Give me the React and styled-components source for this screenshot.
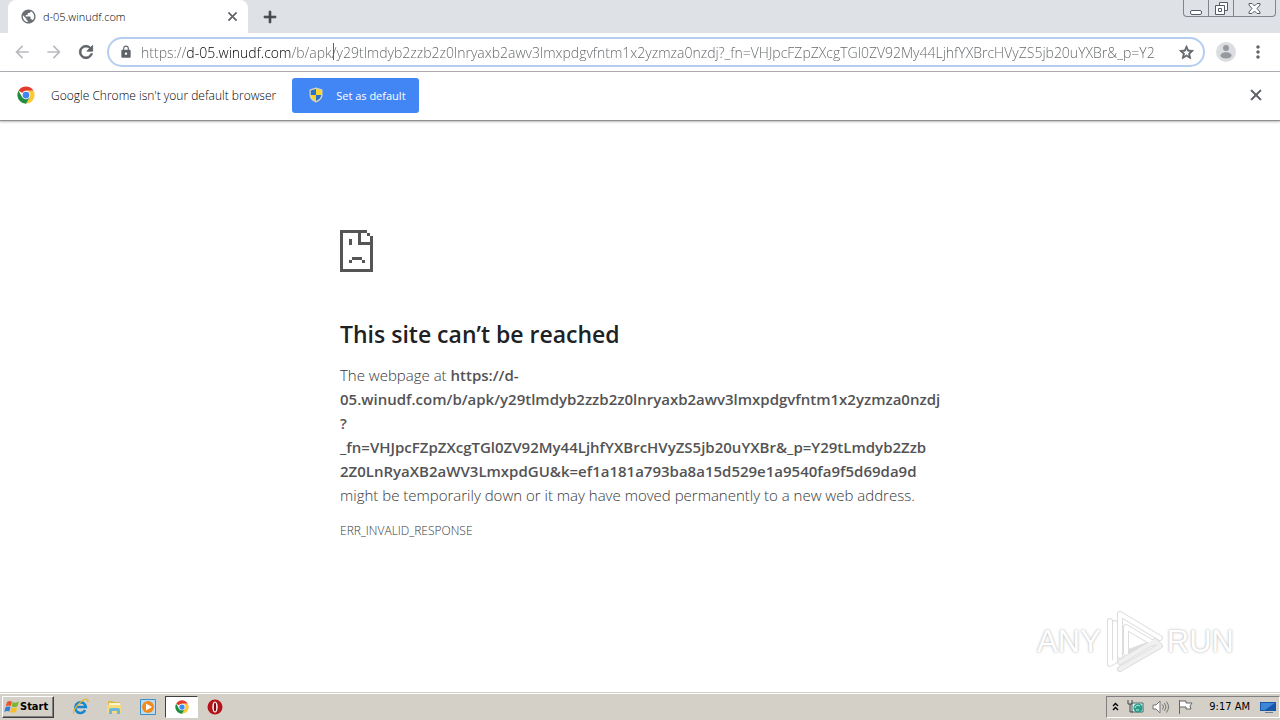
import React from 'react';
import styled, { createGlobalStyle } from 'styled-components';
import {
  MdAdd,
  MdArrowBack,
  MdArrowForward,
  MdClose,
  MdLock,
  MdMoreVert,
  MdPublic,
  MdRefresh,
  MdStarBorder,
} from 'react-icons/md';

const uiFont = '"Open Sans", "Noto Sans", sans-serif';
const taskFont = '"DejaVu Sans Condensed", "DejaVu Sans", sans-serif';

const GlobalStyle = createGlobalStyle`
  * {
    box-sizing: border-box;
  }
  body {
    margin: 0;
    background: #fff;
    font-family: ${uiFont};
    font-weight: 300;
  }
  button {
    margin: 0;
    padding: 0;
    border: 0;
    background: none;
    font-family: inherit;
    font-weight: inherit;
  }
  svg {
    display: block;
    flex: none;
  }
`;

const Screen = styled.div`
  min-height: 100vh;
  display: flex;
  flex-direction: column;
`;

const TabStrip = styled.div`
  height: 33px;
  padding-left: 8px;
  display: flex;
  background: #dee1e6;
`;
const Tab = styled.div`
  width: 240px;
  padding: 0 8px 0 12px;
  display: flex;
  align-items: center;
  gap: 6px;
  background: #fff;
  border-radius: 8px 8px 0 0;
  color: #000;
  font-size: 11px;
`;
const TabTitle = styled.span`
  flex: 1;
`;
const IconButton = styled.button`
  width: ${props => props.$size || 24}px;
  height: ${props => props.$size || 24}px;
  flex: none;
  display: flex;
  align-items: center;
  justify-content: center;
  color: ${props => props.$color || '#5f6368'};
  path:not([fill="none"]) {
    stroke: currentColor;
    stroke-width: ${props => (props.$bold ? 1 : 0)}px;
  }
`;
const NewTab = styled(IconButton)`
  margin: 5px 0 0 10px;
`;
const WindowControls = styled.div`
  height: 17px;
  margin: 0 4px 0 auto;
  display: flex;
  border: 1px solid #80858c;
  border-top: 0;
  border-radius: 0 0 4px 4px;
`;
const WindowButton = styled.button`
  width: ${props => props.$width}px;
  display: flex;
  align-items: center;
  justify-content: center;
  & + & {
    border-left: 1px solid #80858c;
  }
`;

const Toolbar = styled.div`
  height: 39px;
  padding: 0 10px;
  display: flex;
  align-items: center;
  border-bottom: 1px solid #a9abb1;
`;
const NavButtons = styled.div`
  display: flex;
  gap: 8px;
  margin-right: 9px;
`;
const Omnibox = styled.div`
  position: relative;
  flex: 1;
  min-width: 0;
  height: 30px;
  padding: 0 7px 0 10px;
  display: flex;
  align-items: center;
  gap: 8px;
  border: 2px solid #b5cdee;
  border-radius: 15px;
`;
// the host part of the address is darker than the rest
const Address = styled.input`
  flex: 1;
  min-width: 0;
  height: 24px;
  margin-right: 13px;
  padding: 0;
  border: 0;
  outline: 0;
  color: #74787c;
  font-family: ${uiFont};
  font-size: 14px;
  font-weight: 300;
  background: linear-gradient(90deg, #5f6265 46px, #000 46px, #000 151px, #5f6265 151px);
  -webkit-background-clip: text;
  background-clip: text;
  -webkit-text-fill-color: transparent;
`;
const Caret = styled.span`
  position: absolute;
  left: 224px;
  top: 4px;
  width: 1px;
  height: 17px;
  background: #5f6368;
`;
const ToolbarEnd = styled.div`
  display: flex;
  align-items: center;
  gap: 10px;
  margin-left: 11px;
`;

const InfoBar = styled.div`
  height: 49px;
  padding: 0 12px 2px 17px;
  display: flex;
  align-items: center;
  border-bottom: 1px solid #8f8f8f;
  box-shadow: 0 1px 2px #bbb;
  color: #000;
  font-size: 12px;
`;
const InfoText = styled.span`
  margin: 0 16px;
`;
const DefaultButton = styled.button`
  width: 127px;
  height: 35px;
  padding-left: 16px;
  display: flex;
  align-items: center;
  gap: 12px;
  border-radius: 3px;
  background: #4285f4;
  color: #fff;
  font-size: 11px;
  font-weight: 400;
  margin-right: auto;
`;

const Page = styled.main`
  position: relative;
  flex: 1;
  padding: 109px 24px 24px;
`;
const ErrorContent = styled.div`
  max-width: 600px;
  margin: 0 auto;
  color: #38383a;
  font-size: 15px;
  line-height: 24px;
  p {
    margin: 0;
  }
  strong {
    color: #535355;
    font-weight: 600;
  }
`;
const Title = styled.h1`
  margin: 46px 0 13px;
  color: #202124;
  font-size: 23px;
  font-weight: 600;
  line-height: 32px;
`;
const ErrorCode = styled.div`
  margin-top: 12px;
  font-size: 12px;
`;
const Watermark = styled.div`
  position: absolute;
  right: 46px;
  bottom: 18px;
  display: flex;
  align-items: center;
  gap: 4px;
  color: #fff;
  font-family: "Liberation Sans", sans-serif;
  font-size: 31px;
  font-weight: 400;
  line-height: 64px;
  text-shadow: 0 0 3px #bbb, 0 0 1px #ccc;
`;

const Taskbar = styled.footer`
  height: 28px;
  padding: 2px 0 2px 2px;
  display: flex;
  align-items: center;
  border-top: 1px solid #d4d0c8;
  background: #d4d0c8;
  box-shadow: inset 0 1px #fff;
  font-family: ${taskFont};
  font-size: 11px;
  font-weight: 400;
`;
const StartButton = styled.button`
  height: 22px;
  width: 52px;
  padding: 0 1px;
  display: flex;
  align-items: center;
  border: 1px solid;
  border-color: #fff #404040 #404040 #fff;
  box-shadow: inset -1px -1px #808080;
  color: #000;
  font-family: ${taskFont};
  font-size: 11px;
  font-weight: 700;
`;
const QuickLaunch = styled.div`
  display: flex;
  margin-left: 9px;
`;
const TaskButton = styled.button`
  width: 34px;
  height: 22px;
  display: flex;
  align-items: center;
  justify-content: center;
  ${props => props.$active && `
    width: 33px;
    background: #fff;
    border: 1px solid;
    border-color: #404040 #fff #fff #404040;
  `}
`;
const Tray = styled.div`
  height: 22px;
  margin-left: auto;
  padding: 0 3px 0 5px;
  display: flex;
  align-items: center;
  gap: 8px;
  border: 1px solid;
  border-color: #808080 #fff #fff #808080;
`;
const Clock = styled.time`
  margin: 0 2px 0 7px;
`;

const ChromeLogo = ({ size = 18 }) => (
  <svg width={size} height={size} viewBox="0 0 48 48">
    <path d="M24 24 4.1 12.5A23 23 0 0 1 43.9 12.5H24z" fill="#e33b2e" />
    <path d="M24 12.5h19.9A23 23 0 0 1 24 47l10-17.3z" fill="#fcc934" />
    <path d="M4.1 12.5A23 23 0 0 0 24 47l10-17.3L14 29.7z" fill="#1e8e3e" />
    <circle cx="24" cy="24" r="11.5" fill="#fff" />
    <circle cx="24" cy="24" r="9" fill="#4285f4" />
  </svg>
);

const Shield = () => (
  <svg width="16" height="16" viewBox="0 0 16 16">
    <path d="M8 .5 14.5 2.5V8c0 3.5-3 6-6.5 7.5C4.5 14 1.5 11.5 1.5 8V2.5z" fill="#d5d4b8" />
    <path d="M8 2v6H2.8V3.5z" fill="#2a6fc9" />
    <path d="m8 2 5.2 1.5V8H8z" fill="#fbd52b" />
    <path d="M2.8 8H8v6C5 12.6 2.9 10.5 2.8 8z" fill="#fbd52b" />
    <path d="M13.2 8H8v6c3-1.4 5.1-3.5 5.2-6z" fill="#2a6fc9" />
  </svg>
);

const Avatar = () => (
  <svg width="20" height="20" viewBox="0 0 20 20">
    <circle cx="10" cy="10" r="10" fill="#dcdde0" />
    <circle cx="10" cy="6" r="3" fill="#969a9f" />
    <path d="M4.5 13.5c0-2 2.5-3.3 5.5-3.3s5.5 1.3 5.5 3.3-2.5 3-5.5 3-5.5-1-5.5-3z" fill="#969a9f" />
  </svg>
);

const SadPage = () => (
  <svg width="33" height="42" viewBox="0 0 33 42" shapeRendering="crispEdges" fill="#555">
    <path d="M0 0h27v3H3v36h27V6h3v36H0z" />
    <path d="M18 3h3v9h9v3H18zM27 3h3v3h-3zM9 9h3v6H9zM12 27h10v3H12zM9 30h3v3H9zM22 30h3v3h-3z" />
  </svg>
);

const PlayMark = () => (
  <svg width="58" height="64" viewBox="0 0 58 64" fill="none" strokeLinejoin="round" strokeLinecap="round">
    <g stroke="#ddd" strokeWidth="6">
      <path d="M15 46V4l40 24M5 11v43l5-3V13M15 59l40-23-5-5-35 21M21 43V17l27 16z" />
    </g>
    <g stroke="#fff" strokeWidth="4">
      <path d="M15 46V4l40 24M5 11v43l5-3V13M21 43V17l27 16" />
    </g>
    <path d="m15 59 40-23-5-5-35 21" stroke="#f0f0f0" strokeWidth="4" />
  </svg>
);

const WindowsFlag = () => (
  <svg width="16" height="16" viewBox="0 0 16 16">
    <path d="M3 3c2-1.3 3.5-1.2 5-.3L6.8 7.2C5.3 6.3 3.6 6.4 1.8 7.4z" fill="#e8562a" />
    <path d="M8.8 3c1.7 1 3.7 1 6-.4l-1.3 4.7c-2 1.2-4 1.2-5.8.2z" fill="#7db72f" />
    <path d="M1.5 8.3c1.7-1 3.5-1 5-.2L5.3 12.5c-1.5-.9-3.1-.8-5 .3z" fill="#2f7fd6" />
    <path d="M7.4 8.4c1.9 1.1 3.8 1 5.9-.1L12 12.8c-2 1.2-4 1.2-5.8.2z" fill="#f8be24" />
  </svg>
);

const ExplorerE = () => (
  <svg width="17" height="17" viewBox="0 0 17 17" fill="none">
    <path d="M13 12c-1 2-2.6 3-4.5 3A5.3 5.3 0 1 1 13.8 9H4" stroke="#1786d1" strokeWidth="2.6" />
    <path d="M2 15.5C-.5 12 12-1 15.5 1.5c.7.5.5 1.7 0 2.8" stroke="#e8b52b" strokeWidth="1.3" />
  </svg>
);

const FolderIcon = () => (
  <svg width="17" height="16" viewBox="0 0 17 16">
    <path d="M2 2h5l1 1h6v10H2z" fill="#e0b84e" />
    <path d="M3 4h11v3H3z" fill="#fff6ca" />
    <path d="M1 6h14v8H1z" fill="#f7db7d" />
    <path d="M3 15v-4q0-2 2-2h7q2 0 2 2v4h-3v-3H6v3z" fill="#6db7dd" />
  </svg>
);

const MediaIcon = () => (
  <svg width="16" height="16" viewBox="0 0 16 16">
    <path d="M.5.5h15v15H.5z" fill="#b9dcf5" stroke="#3d8fcc" />
    <circle cx="8" cy="8" r="6" fill="#f28a1c" />
    <path d="m6 4.5 6 3.5-6 3.5z" fill="#fff" />
  </svg>
);

const OperaIcon = () => (
  <svg width="16" height="16" viewBox="0 0 16 16">
    <circle cx="8" cy="8" r="7.5" fill="#b5131a" />
    <ellipse cx="8" cy="8" rx="2.7" ry="5.5" fill="#fff" />
    <ellipse cx="8" cy="8" rx="1.2" ry="4.5" fill="#7d0b10" />
  </svg>
);

const TrayIcons = () => (
  <>
    <svg width="7" height="10" viewBox="0 0 7 10" fill="none" stroke="#000" strokeWidth="1.4">
      <path d="m1 4 2.5-2.5L6 4M1 8l2.5-2.5L6 8" />
    </svg>
    <svg width="17" height="16" viewBox="0 0 17 16">
      <path d="M5 4h11v9H5z" fill="#d9efec" stroke="#4d6b6b" />
      <circle cx="11" cy="9" r="4.5" fill="#2a9c8c" />
      <path d="M8 9a3 3 0 0 1 5-2M9 11h3" stroke="#bff0e3" fill="none" />
      <path d="M1 1v4h4V1M3 5v8h3" fill="none" stroke="#444" />
    </svg>
    <svg width="17" height="16" viewBox="0 0 17 16" fill="none" stroke="#777">
      <path d="M1 6h3l4-4v12l-4-4H1z" fill="#fff" />
      <path d="M10.5 5.5q2 2.5 0 5M12.5 4q3 4 0 8M14.5 2.5q4 5.5 0 11" />
    </svg>
    <svg width="17" height="16" viewBox="0 0 17 16">
      <path d="M2.5 1v14M3 2h6v2h6l-2 3 1 3H9V8H3" fill="#fff" stroke="#666" />
    </svg>
  </>
);

const DesktopIcon = () => (
  <svg width="16" height="16" viewBox="0 0 16 16">
    <path d="M0 3h16v9H0z" fill="#1856a8" />
    <path d="M1 4h14L5 11H1z" fill="#3d86d8" />
    <path d="M5 13h8v1H5z" fill="#6a7f96" />
  </svg>
);

const url = 'https://d-05.winudf.com/b/apk/y29tlmdyb2zzb2z0lnryaxb2awv3lmxpdgvfntm1x2yzmza0nzdj?_fn=VHJpcFZpZXcgTGl0ZV92My44LjhfYXBrcHVyZS5jb20uYXBr&_p=Y29tLmdyb2Zzb2Z0LnRyaXB2aWV3LmxpdGU&k=ef1a181a793ba8a15d529e1a9540fa9f5d69da9d';

const App = () => (
  <Screen>
    <GlobalStyle />
    <TabStrip>
      <Tab>
        <MdPublic size={17} color="#6b6e72" />
        <TabTitle>d-05.winudf.com</TabTitle>
        <IconButton $size={16} $bold aria-label="Close tab"><MdClose size={15} /></IconButton>
      </Tab>
      <NewTab $size={24} $bold $color="#3c4043" aria-label="New tab"><MdAdd size={20} /></NewTab>
      <WindowControls>
        <WindowButton $width={24} aria-label="Minimize">
          <svg width="12" height="13" viewBox="0 0 12 13">
            <rect x=".5" y="8.5" width="11" height="4" rx="1.5" fill="#fff" stroke="#555b66" />
          </svg>
        </WindowButton>
        <WindowButton $width={25} aria-label="Restore">
          <svg width="13" height="13" viewBox="0 0 13 13" fill="#fff" stroke="#555b66">
            <path d="M4.5.5h8v8h-8z" />
            <path d="M.5 3.5h9v9h-9zM3.5 6.5h3v3h-3z" />
          </svg>
        </WindowButton>
        <WindowButton $width={42} aria-label="Close window">
          <svg width="13" height="11" viewBox="0 0 13 11" fill="#fff" stroke="#555b66">
            <path d="M1 .5h3l2.5 2.5L9 .5h3v1.5L9 5.5l3 3.5v1.5H9L6.5 8 4 10.5H1V9l3-3.5L1 2z" />
          </svg>
        </WindowButton>
      </WindowControls>
    </TabStrip>

    <Toolbar>
      <NavButtons>
        <IconButton $color="#b9bbbe" aria-label="Back"><MdArrowBack size={20} /></IconButton>
        <IconButton $color="#b9bbbe" aria-label="Forward"><MdArrowForward size={20} /></IconButton>
        <IconButton $bold aria-label="Reload"><MdRefresh size={20} /></IconButton>
      </NavButtons>
      <Omnibox>
        <MdLock size={14} color="#5f6368" />
        <Address aria-label="Address" defaultValue={url} spellCheck={false} />
        <Caret />
        <IconButton $size={20} $bold aria-label="Bookmark"><MdStarBorder size={17} /></IconButton>
      </Omnibox>
      <ToolbarEnd>
        <IconButton $size={20} aria-label="Profile"><Avatar /></IconButton>
        <IconButton aria-label="Menu"><MdMoreVert size={20} /></IconButton>
      </ToolbarEnd>
    </Toolbar>

    <InfoBar>
      <ChromeLogo />
      <InfoText>Google Chrome isn't your default browser</InfoText>
      <DefaultButton><Shield />Set as default</DefaultButton>
      <IconButton $bold aria-label="Dismiss"><MdClose size={18} /></IconButton>
    </InfoBar>

    <Page>
      <ErrorContent>
        <SadPage />
        <Title>This site can’t be reached</Title>
        <p>
          The webpage at <strong>https://d-<br />
          05.winudf.com/b/apk/y29tlmdyb2zzb2z0lnryaxb2awv3lmxpdgvfntm1x2yzmza0nzdj<br />
          ?<br />
          _fn=VHJpcFZpZXcgTGl0ZV92My44LjhfYXBrcHVyZS5jb20uYXBr&amp;_p=Y29tLmdyb2Zzb<br />
          2Z0LnRyaXB2aWV3LmxpdGU&amp;k=ef1a181a793ba8a15d529e1a9540fa9f5d69da9d</strong><br />
          might be temporarily down or it may have moved permanently to a new web address.
        </p>
        <ErrorCode>ERR_INVALID_RESPONSE</ErrorCode>
      </ErrorContent>
      <Watermark><span>ANY</span><PlayMark /><span>RUN</span></Watermark>
    </Page>

    <Taskbar>
      <StartButton><WindowsFlag />Start</StartButton>
      <QuickLaunch>
        <TaskButton aria-label="Internet Explorer"><ExplorerE /></TaskButton>
        <TaskButton aria-label="Explorer"><FolderIcon /></TaskButton>
        <TaskButton aria-label="Media Player"><MediaIcon /></TaskButton>
        <TaskButton $active aria-label="Chrome"><ChromeLogo size={14} /></TaskButton>
        <TaskButton aria-label="Opera"><OperaIcon /></TaskButton>
      </QuickLaunch>
      <Tray>
        <TrayIcons />
        <Clock>9:17 AM</Clock>
        <DesktopIcon />
      </Tray>
    </Taskbar>
  </Screen>
);

export default App;
